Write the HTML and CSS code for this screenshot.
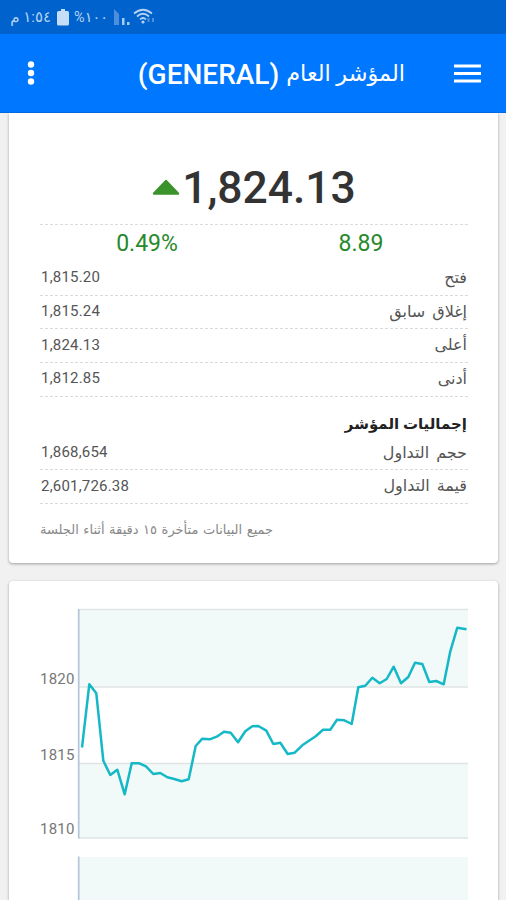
FILE: index.html
```html
<!DOCTYPE html>
<html lang="ar" dir="rtl">
<head>
    <meta charset="UTF-8">
    <meta name="viewport" content="width=device-width, initial-scale=1.0">
    <title>المؤشر العام</title>
    <link rel="stylesheet" href="styles.css">
</head>
<body>
    <div class="status-bar">
        <svg class="wifi" width="22" height="18" viewBox="0 0 22 18">
            <g fill="none" stroke="#b5d2f3" stroke-width="1.7">
                <path d="M1 5.5Q10 -2 19 5.5"/>
                <path d="M4 8.5Q10 3 16 8.5"/>
                <path d="M7 11.5Q10 8.5 13 11.5"/>
            </g>
            <circle cx="10" cy="14" r="1.6" fill="#b5d2f3"/>
            <path d="M15.500 10v4M20 10v4" stroke="#4d8fdc" stroke-width="2"/>
        </svg>
        <svg class="signal" width="18" height="18" viewBox="0 0 18 18">
            <path d="M1 1l5 5v11H1z" fill="#4d8fdc"/>
            <path d="M9 10h2.500v7H9zM14 14h2.500v3H14z" fill="#a7cbf2"/>
        </svg>
        <span class="battery-text" dir="ltr">%١٠٠</span>
        <svg class="battery" width="12" height="18" viewBox="0 0 12 18">
            <path d="M4 1h4v2h2.500q1.500 0 1.500 1.500V16q0 1.500-1.500 1.500h-9Q0 17.500 0 16V4.500Q0 3 1.500 3H4z" fill="#c5ddf7"/>
        </svg>
        <span class="clock">١:٥٤ م</span>
    </div>

    <header class="app-bar">
        <svg class="menu" width="27" height="20" viewBox="0 0 27 20">
            <path d="M0 3h27M0 10.500h27M0 18h27" stroke="#fff" stroke-width="3"/>
        </svg>
        <h1><span class="title-ar">المؤشر العام</span> <span class="title-en" dir="ltr">(GENERAL)</span></h1>
        <svg class="more" width="8" height="24" viewBox="0 0 8 24">
            <g fill="#fff">
                <circle cx="4" cy="3.500" r="3.200"/>
                <circle cx="4" cy="12" r="3.200"/>
                <circle cx="4" cy="20.500" r="3.200"/>
            </g>
        </svg>
    </header>

    <main>
        <section class="card summary">
            <div class="price" dir="ltr">
                <svg width="28" height="17" viewBox="0 0 28 17">
                    <path d="M14 2L26 14.500H2z" fill="#3b932b" stroke="#3b932b" stroke-width="2.500" stroke-linejoin="round"/>
                </svg>
                <span>1,824.13</span>
            </div>
            <div class="change">
                <span>8.89</span>
                <span dir="ltr">0.49%</span>
            </div>
            <div class="row"><span class="label">فتح</span><span class="value">1,815.20</span></div>
            <div class="row"><span class="label">إغلاق سابق</span><span class="value">1,815.24</span></div>
            <div class="row"><span class="label">أعلى</span><span class="value">1,824.13</span></div>
            <div class="row"><span class="label">أدنى</span><span class="value">1,812.85</span></div>
            <h2>إجماليات المؤشر</h2>
            <div class="row"><span class="label">حجم التداول</span><span class="value">1,868,654</span></div>
            <div class="row"><span class="label">قيمة التداول</span><span class="value">2,601,726.38</span></div>
            <p class="note">جميع البيانات متأخرة ١٥ دقيقة أثناء الجلسة</p>
        </section>

        <section class="card charts">
            <svg class="chart" width="428" height="300" viewBox="40 600 428 300" direction="ltr">
                <!-- bands -->
                <path d="M79 610h389v77H79zM79 764h389v74H79zM79 857h389v43H79z" fill="#f2faf9"/>
                <!-- grid -->
                <path d="M79 609.500h389M79 687h389M79 763.500h389M79 838h389" stroke="#dfe3e4" stroke-width="1.700"/>
                <path d="M78.700 609v229.500M78.700 856.500V900" stroke="#b5c5d9" stroke-width="1.700"/>
                <g class="axis">
                    <text x="40" y="684">1820</text>
                    <text x="40" y="760">1815</text>
                    <text x="40" y="834">1810</text>
                </g>
                <polyline class="line" points="82,747.500 89.300,684.300 96.300,693.300 103.300,760.700 110.300,775 117.300,769.700 124.700,794.300 131.700,763.300 139.300,763.300 146,766.300 153.300,774 160.300,773 167.300,777.300 174.300,779 181.700,781.300 188.700,779.300 195.700,746 202.300,738.700 209.700,739.300 216.700,736.700 224,731.700 230.700,732.700 238,742.300 245.300,731.300 252.300,726.300 258.300,726 266.300,730.700 273.300,744 280.300,742.700 287.700,754 294.700,752.700 302.300,745.300 315.700,736.300 323,729.700 330.300,729.700 337,719.700 344.300,720.300 351.700,724 358.300,687.300 365.300,685.700 372.300,677.700 379.700,683.300 386.700,679 393.700,666.700 401,683.300 408.300,677 415,662.700 422.300,664 429.300,682 436.300,681 443.700,684.300 450.300,651.300 457.300,627.700 466.500,629.300"/>
            </svg>
        </section>
    </main>
</body>
</html>
```
FILE: styles.css
```css
* {
    box-sizing: border-box;
}

body {
    margin: 0;
    height: 900px;
    overflow: hidden;
    background: #f1f1f1;
    font-family: Roboto, "DejaVu Sans", sans-serif;
    color: #555;
}

.status-bar {
    display: flex;
    direction: ltr;
    flex-direction: row-reverse;
    justify-content: flex-end;
    align-items: center;
    height: 34px;
    padding-left: 8px;
    background: #0062cc;
    color: #b5d2f3;
    font-size: 15px;
    white-space: nowrap;
}

.clock {
    direction: rtl;
    width: 43px;
    margin-right: 6px;
}

.battery {
    margin-right: 5px;
}

.battery-text {
    width: 33px;
    margin-right: 6px;
    font-size: 14.5px;
}

.signal {
    margin-right: 2px;
}

.app-bar {
    display: flex;
    align-items: center;
    height: 79px;
    padding: 0 25px 0 27px;
    background: #0077ff;
    border-bottom: 1px solid #0069df;
    color: #fff;
}

.app-bar h1 {
    display: flex;
    align-items: center;
    gap: 7px;
    flex: 1;
    margin: 0;
    padding-right: 49px;
    font-weight: 500;
    white-space: nowrap;
}

.title-ar {
    font-size: 22.4px;
    font-weight: 400;
}

.title-en {
    padding-top: 3px;
    font-size: 28px;
}

main {
    padding: 0 8px 0 9px;
}

.card {
    padding: 0 30px 0 31px;
    background: #fff;
    border-radius: 4px;
    box-shadow: 0 1px 3px rgba(0, 0, 0, 0.35);
}

.summary {
    height: 450px;
    border-radius: 0 0 4px 4px;
    clip-path: inset(0 -5px -5px -5px);
}

.price {
    display: flex;
    align-items: center;
    justify-content: center;
    gap: 2px;
    height: 112px;
    padding-top: 38px;
    border-bottom: 1px dashed #dcdcdc;
    color: #333;
    font-size: 44.4px;
    font-weight: 500;
}

.change {
    display: grid;
    grid-template-columns: 1fr 1fr;
    height: 37px;
    line-height: 37px;
    text-align: center;
    color: #27892a;
    font-size: 23px;
}

.row {
    display: flex;
    justify-content: space-between;
    align-items: center;
    height: 33.7px;
    padding: 0 1px 2px;
    border-bottom: 1px dashed #dadada;
    font-size: 15px;
}

.label {
    font-size: 16px;
    word-spacing: 3px;
}

.value {
    direction: ltr;
    letter-spacing: 0.2px;
}

h2 {
    height: 40px;
    margin: 0;
    padding: 15px 1px 0;
    line-height: 24px;
    font-size: 15px;
    color: #222;
}

.note {
    margin: 14px 0 0;
    line-height: 24px;
    text-align: left;
    font-size: 13px;
    word-spacing: 1.3px;
    color: #888;
}

.charts {
    height: 340px;
    margin-top: 18px;
    padding-top: 19px;
}

.chart {
    display: block;
}

.axis {
    fill: #777;
    font-size: 15px;
    letter-spacing: 0.2px;
}

.line {
    fill: none;
    stroke: #14b8c6;
    stroke-width: 2.5;
    stroke-linejoin: round;
}
```
